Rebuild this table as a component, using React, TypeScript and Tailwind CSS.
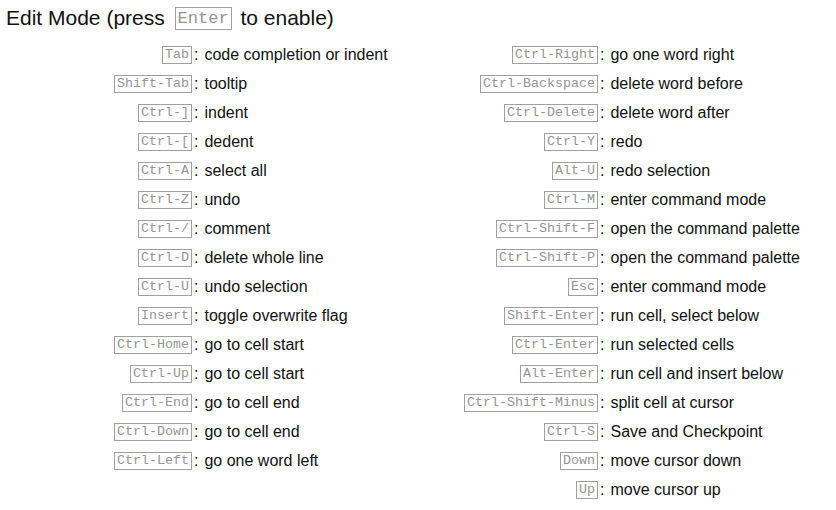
const leftRows: [string, string][] = [
  ["Tab", "code completion or indent"],
  ["Shift-Tab", "tooltip"],
  ["Ctrl-]", "indent"],
  ["Ctrl-[", "dedent"],
  ["Ctrl-A", "select all"],
  ["Ctrl-Z", "undo"],
  ["Ctrl-/", "comment"],
  ["Ctrl-D", "delete whole line"],
  ["Ctrl-U", "undo selection"],
  ["Insert", "toggle overwrite flag"],
  ["Ctrl-Home", "go to cell start"],
  ["Ctrl-Up", "go to cell start"],
  ["Ctrl-End", "go to cell end"],
  ["Ctrl-Down", "go to cell end"],
  ["Ctrl-Left", "go one word left"],
];

const rightRows: [string, string][] = [
  ["Ctrl-Right", "go one word right"],
  ["Ctrl-Backspace", "delete word before"],
  ["Ctrl-Delete", "delete word after"],
  ["Ctrl-Y", "redo"],
  ["Alt-U", "redo selection"],
  ["Ctrl-M", "enter command mode"],
  ["Ctrl-Shift-F", "open the command palette"],
  ["Ctrl-Shift-P", "open the command palette"],
  ["Esc", "enter command mode"],
  ["Shift-Enter", "run cell, select below"],
  ["Ctrl-Enter", "run selected cells"],
  ["Alt-Enter", "run cell and insert below"],
  ["Ctrl-Shift-Minus", "split cell at cursor"],
  ["Ctrl-S", "Save and Checkpoint"],
  ["Down", "move cursor down"],
  ["Up", "move cursor up"],
];

function Key({ label }: { label: string }) {
  return (
    <kbd className="inline-block border border-[#a0a0a0] px-[2px] text-[13.33px] leading-[16px] text-[#959595] font-['Liberation_Mono',monospace]">
      {label}
    </kbd>
  );
}

function ShortcutColumn({ rows }: { rows: [string, string][] }) {
  return (
    <div className="flex flex-col">
      {rows.map(([key, descr]) => (
        <div key={key + descr} className="flex h-[29px] items-center">
          <div className="flex w-[192px] justify-end">
            <Key label={key} />
          </div>
          <span className="ml-[2px] text-[#111]">:</span>
          <span className="ml-[6px] whitespace-nowrap text-[#111]">{descr}</span>
        </div>
      ))}
    </div>
  );
}

export default function App() {
  return (
    <div className="h-[510px] w-[836px] bg-white font-['Liberation_Sans',Arial,sans-serif] text-[16px]">
      {/* Title */}
      <div className="flex items-center pl-[6px] pt-[6px] pb-[10px] text-[21px] leading-[24px] text-[#111]">
        <span className="whitespace-pre">Edit Mode (press </span>
        <kbd className="ml-[4px] inline-block border border-[#a0a0a0] px-[2px] text-[17px] leading-[21px] text-[#959595] font-['Liberation_Mono',monospace]">
          Enter
        </kbd>
        <span className="ml-[3px] whitespace-pre"> to enable)</span>
      </div>

      {/* Shortcuts */}
      <div className="grid grid-cols-[406px_1fr]">
        <ShortcutColumn rows={leftRows} />
        <ShortcutColumn rows={rightRows} />
      </div>
    </div>
  );
}
